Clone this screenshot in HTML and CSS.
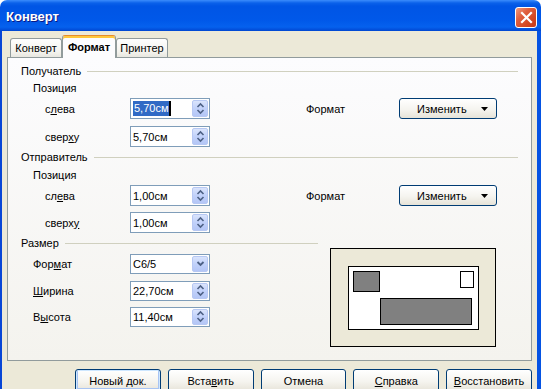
FILE: index.html
```html
<!DOCTYPE html>
<html lang="ru">
<head>
    <meta charset="UTF-8">
    <title>Конверт</title>
    <link rel="stylesheet" href="styles.css">
</head>
<body>
    <div class="window">
        <div class="titlebar">
            <span class="title">Конверт</span>
            <div class="close-btn">
                <svg width="13" height="13" viewBox="0 0 13 13"><path d="M2 2 L11 11 M11 2 L2 11" stroke="#fff" stroke-width="2.2" stroke-linecap="square"/></svg>
            </div>
        </div>

        <div class="frame">
            <div class="tabs">
                <div class="tab">Конверт</div>
                <div class="tab active">Формат</div>
                <div class="tab">Принтер</div>
            </div>

            <div class="panel">
                <!-- Addressee -->
                <div class="group-title">Получатель</div>
                <div class="sub-title">Позиция</div>
                <div class="row row-first">
                    <span class="label">с<u>л</u>ева</span>
                    <div class="field"><span class="value"><span class="selected">5,70см</span></span><span class="spin"><svg width="9" height="13" viewBox="0 0 9 13"><path d="M1.5 5 L4.5 2 L7.5 5 M1.5 8 L4.5 11 L7.5 8" fill="none" stroke="#4d6185" stroke-width="1.6"/></svg></span></div>
                    <span class="label format-label">Формат</span>
                    <div class="btn menu-btn"><span>Изменить</span><svg width="7" height="4" viewBox="0 0 7 4"><path d="M0 0 H7 L3.5 4 Z" fill="#000"/></svg></div>
                </div>
                <div class="row row-second">
                    <span class="label">свер<u>х</u>у</span>
                    <div class="field"><span class="value">5,70см</span><span class="spin"><svg width="9" height="13" viewBox="0 0 9 13"><path d="M1.5 5 L4.5 2 L7.5 5 M1.5 8 L4.5 11 L7.5 8" fill="none" stroke="#4d6185" stroke-width="1.6"/></svg></span></div>
                </div>

                <!-- Sender -->
                <div class="group-title">Отправитель</div>
                <div class="sub-title sub-title-2">Позиция</div>
                <div class="row row-first">
                    <span class="label">сл<u>е</u>ва</span>
                    <div class="field"><span class="value">1,00см</span><span class="spin"><svg width="9" height="13" viewBox="0 0 9 13"><path d="M1.5 5 L4.5 2 L7.5 5 M1.5 8 L4.5 11 L7.5 8" fill="none" stroke="#4d6185" stroke-width="1.6"/></svg></span></div>
                    <span class="label format-label">Формат</span>
                    <div class="btn menu-btn"><span>Изменить</span><svg width="7" height="4" viewBox="0 0 7 4"><path d="M0 0 H7 L3.5 4 Z" fill="#000"/></svg></div>
                </div>
                <div class="row row-third">
                    <span class="label">сверх<u>у</u></span>
                    <div class="field"><span class="value">1,00см</span><span class="spin"><svg width="9" height="13" viewBox="0 0 9 13"><path d="M1.5 5 L4.5 2 L7.5 5 M1.5 8 L4.5 11 L7.5 8" fill="none" stroke="#4d6185" stroke-width="1.6"/></svg></span></div>
                </div>

                <!-- Size -->
                <div class="size-section">
                    <div class="size-left">
                        <div class="group-title">Размер</div>
                        <div class="row size-row size-row-1">
                            <span class="label">Фор<u>м</u>ат</span>
                            <div class="field"><span class="value">C6/5</span><span class="spin"><svg width="9" height="7" viewBox="0 0 9 7"><path d="M1.5 2 L4.5 5 L7.5 2" fill="none" stroke="#4d6185" stroke-width="1.8"/></svg></span></div>
                        </div>
                        <div class="row size-row size-row-2">
                            <span class="label"><u>Ш</u>ирина</span>
                            <div class="field"><span class="value">22,70см</span><span class="spin"><svg width="9" height="13" viewBox="0 0 9 13"><path d="M1.5 5 L4.5 2 L7.5 5 M1.5 8 L4.5 11 L7.5 8" fill="none" stroke="#4d6185" stroke-width="1.6"/></svg></span></div>
                        </div>
                        <div class="row size-row size-row-3">
                            <span class="label">В<u>ы</u>сота</span>
                            <div class="field"><span class="value">11,40см</span><span class="spin"><svg width="9" height="13" viewBox="0 0 9 13"><path d="M1.5 5 L4.5 2 L7.5 5 M1.5 8 L4.5 11 L7.5 8" fill="none" stroke="#4d6185" stroke-width="1.6"/></svg></span></div>
                        </div>
                    </div>

                    <div class="preview">
                        <div class="envelope">
                            <div class="sender-box"></div>
                            <div class="stamp"></div>
                            <div class="addressee-box"></div>
                        </div>
                    </div>
                </div>
            </div>

            <div class="buttons">
                <div class="btn default-btn">Новый док.</div>
                <div class="btn">Вста<u>в</u>ить</div>
                <div class="btn">Отмена</div>
                <div class="btn"><u>С</u>правка</div>
                <div class="btn"><u>В</u>осстановить</div>
            </div>
        </div>
    </div>
</body>
</html>
```

FILE: styles.css
```css
* {
    margin: 0;
    padding: 0;
    box-sizing: border-box;
}

body {
    background-color: #fff;
    font-family: 'Liberation Sans', Arial, sans-serif;
    font-size: 11px;
    line-height: 14px;
    color: #000;
    overflow: hidden;
}

u {
    text-decoration: underline;
    text-underline-offset: 1px;
}

.window {
    width: 541px;
    height: 400px;
    border-radius: 7px 7px 0 0;
    overflow: hidden;
}

/* Title bar */
.titlebar {
    height: 31px;
    display: flex;
    align-items: center;
    justify-content: space-between;
    padding: 0 4px 0 6px;
    background: linear-gradient(#3b8cfc 0px, #0b61ea 3px, #0055e5 6px, #0058e9 20px, #0561ee 27px, #0046d1 31px);
}

.title {
    color: #fff;
    font-weight: bold;
    font-size: 13px;
    text-shadow: 1px 1px 0 #0a1883;
    margin-top: 3px;
}

.close-btn {
    width: 22px;
    height: 21px;
    margin-top: 3px;
    border: 1px solid #fff;
    border-radius: 3px;
    background: linear-gradient(135deg, #f09a7e 0%, #e0603f 35%, #d2441f 75%, #c43d1c 100%);
    display: flex;
    align-items: center;
    justify-content: center;
}

/* Frame */
.frame {
    height: 369px;
    background-color: #ece9d8;
    border-left: 2px solid #0846d6;
    border-right: 4px solid #0553e3;
    padding: 4px 5px 0 5px;
}

.tabs {
    display: flex;
    align-items: flex-end;
    height: 22px;
    padding-left: 3px;
}

.tab {
    width: 52px;
    height: 19px;
    border: 1px solid #919b9c;
    border-bottom: none;
    border-radius: 3px 3px 0 0;
    background: linear-gradient(#fefefe, #f4f3ee 70%, #e8e7e0);
    text-align: center;
    line-height: 18px;
}

.tab.active {
    width: 54px;
    height: 23px;
    margin-bottom: -1px;
    position: relative;
    border-top: 1px solid #e68b2c;
    background: #fcfcfe;
    box-shadow: inset 0 2px 0 0 #ffc83c;
    font-weight: bold;
    line-height: 22px;
}

/* Tab panel */
.panel {
    width: 525px;
    height: 304px;
    border: 1px solid #919b9c;
    background: linear-gradient(#fcfcfe, #f4f3ee);
    padding: 0 13px;
}

.group-title {
    display: flex;
    align-items: center;
    gap: 6px;
    margin-top: 6px;
}

.group-title::after {
    content: "";
    flex: 1;
    border-top: 1px solid #d0d0bf;
}

.sub-title {
    margin-top: 3px;
    padding-left: 12px;
}

.sub-title-2 {
    margin-top: 4px;
}

.row {
    display: grid;
    grid-template-columns: 85px 80px 189px 98px;
    align-items: center;
    height: 21px;
    padding-left: 24px;
}

.format-label {
    padding-left: 96px;
}

.row-first {
    margin-top: 3px;
}

.row-second {
    margin-top: 7px;
}

.row-third {
    margin-top: 6px;
}

.row-second + .group-title {
    margin-top: 3px;
}

/* Text fields with spin buttons */
.field {
    height: 21px;
    border: 1px solid #7f9db9;
    background-color: #fff;
    display: flex;
    align-items: center;
    justify-content: space-between;
    padding: 0 1px 0 2px;
}

.value {
    display: flex;
    align-items: center;
}

.selected {
    background-color: #316ac5;
    color: #fff;
    padding: 0 1px;
    border-right: 2px solid #000;
    line-height: 15px;
}

.spin {
    width: 16px;
    height: 17px;
    border: 1px solid #b7c8f3;
    border-radius: 2px;
    background: linear-gradient(#dae4fc, #c1d1fa 50%, #b4c6f6);
    display: flex;
    align-items: center;
    justify-content: center;
}

/* Buttons */
.btn {
    height: 21px;
    border: 1px solid #003c74;
    border-radius: 3px;
    background: linear-gradient(#ffffff, #f5f4ef 55%, #e6e3d8);
    display: flex;
    align-items: center;
    justify-content: center;
}

.menu-btn {
    justify-content: space-between;
    padding: 0 8px 0 17px;
}

/* Size section */
.size-section {
    display: flex;
    margin-top: 3px;
}

.size-section .group-title {
    margin-top: 0;
}

.size-left {
    width: 297px;
}

.size-row {
    grid-template-columns: 97px 80px;
    padding-left: 12px;
}

.size-row-1 {
    margin-top: 3px;
}

.size-row-2 {
    margin-top: 6px;
}

.size-row-3 {
    margin-top: 5px;
}

.size-row .field {
    height: 20px;
}

.size-row .spin {
    height: 16px;
}

/* Envelope preview */
.preview {
    width: 166px;
    height: 99px;
    margin: 12px 0 0 12px;
    border: 1px solid #000;
    background-color: #ece9d8;
    display: flex;
    align-items: center;
    justify-content: center;
}

.envelope {
    width: 131px;
    height: 64px;
    border: 1px solid #000;
    background-color: #fff;
    position: relative;
}

.sender-box {
    position: absolute;
    left: 4px;
    top: 4px;
    width: 27px;
    height: 21px;
    border: 1px solid #000;
    background-color: #808080;
}

.stamp {
    position: absolute;
    right: 4px;
    top: 4px;
    width: 14px;
    height: 17px;
    border: 1px solid #000;
    background-color: #fff;
}

.addressee-box {
    position: absolute;
    left: 31px;
    top: 31px;
    width: 92px;
    height: 27px;
    border: 1px solid #000;
    background-color: #808080;
}

/* Dialog buttons */
.buttons {
    display: flex;
    gap: 7px;
    margin-top: 8px;
    padding-left: 68px;
}

.buttons .btn {
    width: 86px;
    height: 23px;
}

.default-btn {
    box-shadow: inset 0 0 0 1px #cee7ff, inset 0 -1px 0 2px #a8c4f3;
}
```
